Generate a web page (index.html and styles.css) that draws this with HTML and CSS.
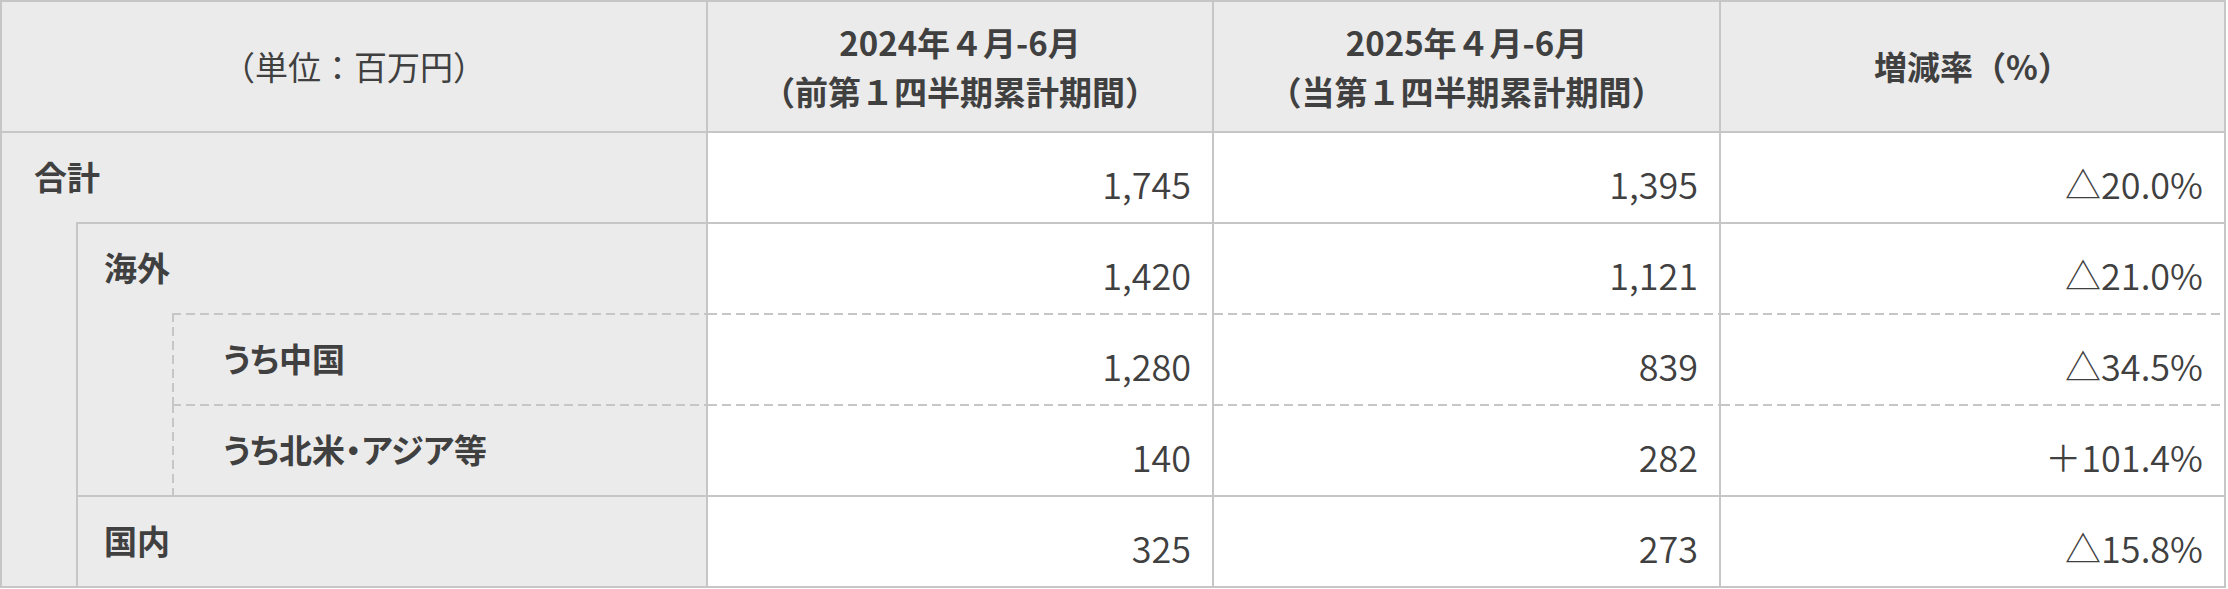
FILE: index.html
```html
<!DOCTYPE html>
<html lang="ja">
<head>
<meta charset="utf-8">
<link rel="stylesheet" href="styles.css">
</head>
<body>
<div class="tbl">
  <div class="c head unit span3">（単位：百万円）</div>
  <div class="c head bold">2024年４月-6月<br>（前第１四半期累計期間）</div>
  <div class="c head bold">2025年４月-6月<br>（当第１四半期累計期間）</div>
  <div class="c head bold">増減率（%）</div>

  <div class="c label lv0 span3">合計</div>
  <div class="c num">1,745</div>
  <div class="c num">1,395</div>
  <div class="c num">△20.0%</div>

  <div class="c spacerA"></div>
  <div class="c label lv1 span2">海外</div>
  <div class="c num">1,420</div>
  <div class="c num">1,121</div>
  <div class="c num">△21.0%</div>

  <div class="c spacerB"></div>
  <div class="c label lv2 dash">うち中国</div>
  <div class="c num dashtop">1,280</div>
  <div class="c num dashtop">839</div>
  <div class="c num dashtop">△34.5%</div>

  <div class="c label lv2 dash">うち北米・アジア等</div>
  <div class="c num dashtop">140</div>
  <div class="c num dashtop">282</div>
  <div class="c num dashtop">＋101.4%</div>

  <div class="c label lv1 span2">国内</div>
  <div class="c num">325</div>
  <div class="c num">273</div>
  <div class="c num">△15.8%</div>
</div>
</body>
</html>
```

FILE: styles.css
```css
html, body {
  margin: 0;
  padding: 0;
  background: #ffffff;
}

body {
  font-family: "Noto Sans CJK JP", "Noto Sans", sans-serif;
  color: #404040;
}

.tbl {
  display: grid;
  grid-template-columns: 76px 96px 534px 506px 507px 505px;
  grid-template-rows: 131px 91px 91px 91px 91px 91px;
  width: 2226px;
  box-sizing: border-box;
  border-right: 2px solid #c6c6c6;
  border-bottom: 2px solid #c6c6c6;
}

.c {
  box-sizing: border-box;
  border-top: 2px solid #c6c6c6;
  border-left: 2px solid #c6c6c6;
  min-width: 0;
}

.span3 { grid-column: span 3; }
.span2 { grid-column: span 2; }

.head {
  background: #ebebeb;
  display: flex;
  align-items: center;
  justify-content: center;
  text-align: center;
  font-size: 33px;
  line-height: 49px;
}

.unit {
  font-weight: 400;
}

.bold {
  font-weight: 700;
}

.label {
  background: #ebebeb;
  font-weight: 700;
  font-size: 33px;
  display: flex;
  align-items: center;
  padding-bottom: 3px;
  font-feature-settings: "palt";
}

.lv0 { padding-left: 32px; }
.lv1 { padding-left: 26px; }
.lv2 { padding-left: 49px; }

.spacerA {
  background: #ebebeb;
  grid-row: span 4;
  border-top: none;
}

.spacerB {
  background: #ebebeb;
  grid-row: span 2;
  border-top: none;
}

.dash {
  border-top: none;
  border-left: none;
  padding-top: 2px;
  padding-left: 51px;
  background:
    repeating-linear-gradient(to right, #c6c6c6 0 9px, transparent 9px 14px) left top / 100% 2px no-repeat,
    repeating-linear-gradient(to bottom, #c6c6c6 0 9px, transparent 9px 14px) left top / 2px 100% no-repeat,
    #ebebeb;
}

.num {
  background: #ffffff;
  display: flex;
  align-items: center;
  justify-content: flex-end;
  padding-right: 21px;
  padding-top: 10px;
  font-size: 36px;
  font-weight: 350;
}

.dashtop {
  border-top: none;
  padding-top: 12px;
  background:
    repeating-linear-gradient(to right, #c6c6c6 0 9px, transparent 9px 14px) left top / 100% 2px no-repeat,
    #ffffff;
}
```
